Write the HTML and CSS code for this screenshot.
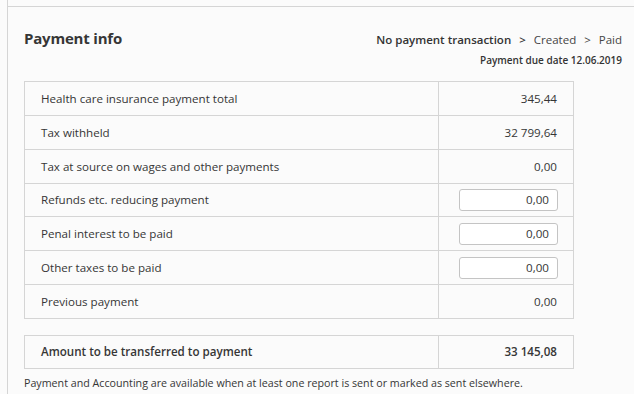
FILE: index.html
```html
<!DOCTYPE html>
<html>
<head>
<meta charset="utf-8">
<link rel="stylesheet" href="styles.css">
</head>
<body>
<div class="page">
  <div class="panel">
    <div class="header">
      <h1 class="title">Payment info</h1>
      <div class="status">
        <div class="steps">
          <span class="step current">No payment transaction</span>
          <span class="sep current">&gt;</span>
          <span class="step">Created</span>
          <span class="sep">&gt;</span>
          <span class="step">Paid</span>
        </div>
        <div class="due">Payment due date 12.06.2019</div>
      </div>
    </div>
    <table class="grid">
      <tr><td class="label">Health care insurance payment total</td><td class="value">345,44</td></tr>
      <tr><td class="label">Tax withheld</td><td class="value">32 799,64</td></tr>
      <tr><td class="label">Tax at source on wages and other payments</td><td class="value">0,00</td></tr>
      <tr><td class="label">Refunds etc. reducing payment</td><td class="value"><input class="field" type="text" value="0,00"></td></tr>
      <tr><td class="label">Penal interest to be paid</td><td class="value"><input class="field" type="text" value="0,00"></td></tr>
      <tr><td class="label">Other taxes to be paid</td><td class="value"><input class="field" type="text" value="0,00"></td></tr>
      <tr><td class="label">Previous payment</td><td class="value">0,00</td></tr>
    </table>
    <table class="grid total">
      <tr><td class="label">Amount to be transferred to payment</td><td class="value">33 145,08</td></tr>
    </table>
    <p class="note">Payment and Accounting are available when at least one report is sent or marked as sent elsewhere.</p>
  </div>
</div>
</body>
</html>
```
FILE: styles.css
```css
html, body {
  margin: 0;
  padding: 0;
  background: #fbfbfb;
}
body {
  font-family: "Open Sans", "Noto Sans", sans-serif;
  color: #333;
  width: 634px;
  height: 394px;
  overflow: hidden;
}
.page {
  margin-left: 7px;
  border-left: 1px solid #d5d5d5;
  padding-top: 6px;
  height: 388px;
}
.panel {
  border-top: 1px solid #d5d5d5;
  padding: 0 12px 0 16px;
}
.header {
  display: flex;
  justify-content: space-between;
  align-items: flex-start;
  padding-top: 23px;
  height: 74px;
  box-sizing: border-box;
}
.title {
  margin: -2px 0 0;
  font-size: 15px;
  font-weight: 700;
  line-height: 20px;
  letter-spacing: -0.2px;
  color: #363636;
}
.status {
  text-align: right;
}
.steps {
  font-size: 11.5px;
  line-height: 20px;
  color: #454545;
}
.step.current, .sep.current {
  font-weight: 600;
  color: #333;
}
.sep {
  margin: 0 5px;
}
.due {
  font-size: 10px;
  font-weight: 600;
  line-height: 20px;
  color: #333;
}
.grid {
  border-collapse: collapse;
  width: 550px;
  font-size: 11.6px;
  color: #363636;
}
.grid td {
  border: 1px solid #d5d5d5;
  height: 33.85px;
  padding: 0 16px;
  box-sizing: border-box;
}
.grid .label {
  width: 414px;
}
.grid .value {
  text-align: right;
}
.field {
  width: 99px;
  height: 22px;
  box-sizing: border-box;
  border: 1px solid #c4c4c4;
  border-radius: 3px;
  background: #fff;
  font: inherit;
  color: #363636;
  text-align: right;
  padding: 0 8px;
  margin-right: -1px;
  display: block;
  margin-left: auto;
}
.total {
  margin-top: 16px;
  font-weight: 600;
}
.total td {
  height: 33px;
}
.note {
  margin: 6px 0 0;
  font-size: 10.7px;
  line-height: 16px;
  color: #363636;
}
```
